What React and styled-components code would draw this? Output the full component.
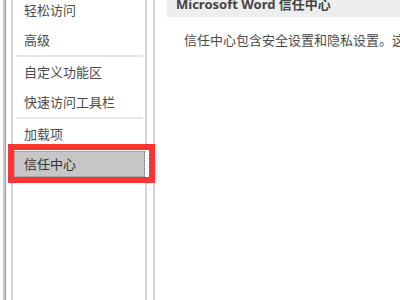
import styled, { createGlobalStyle } from "styled-components";

const GlobalStyle = createGlobalStyle`
  html, body {
    margin: 0;
    padding: 0;
    background: #ffffff;
  }
  body {
    width: 400px;
    height: 300px;
    overflow: hidden;
    font-family: "Noto Sans", "Noto Sans CJK SC", sans-serif;
  }
`;

const groups = [
  ["轻松访问", "高级"],
  ["自定义功能区", "快速访问工具栏"],
  ["加载项", "信任中心"],
];

const selected = "信任中心";

const App = () => {
  return (
    <>
      <GlobalStyle />
      <Window>
        <Edge />
        <ListBox>
          <List>
            {groups.map((group, i) => (
              <Group key={i}>
                {i > 0 && <Separator />}
                {group.map((label) => (
                  <Item key={label} active={label === selected}>
                    {label}
                    {label === selected && <Highlight />}
                  </Item>
                ))}
              </Group>
            ))}
          </List>
        </ListBox>
        <Divider />
        <Content>
          <Header>Microsoft Word 信任中心</Header>
          <Text>信任中心包含安全设置和隐私设置。这些设置有助于保护计算机的安全。</Text>
        </Content>
      </Window>
    </>
  );
};

const Window = styled.div`
  display: flex;
  width: 400px;
  height: 300px;
  overflow: hidden;
`;

const Edge = styled.div`
  flex: none;
  width: 3px;
  margin: 0 5px 0 3px;
  background: linear-gradient(to right, #c9c9c9 0 2px, #7aa4e0 2px 3px);
`;

const ListBox = styled.div`
  flex: none;
  box-sizing: border-box;
  width: 136px;
  height: 100%;
  padding-left: 1px;
  border-left: 2px solid #d6d6d6;
  border-right: 2px solid #d6d6d6;
`;

const List = styled.div`
  display: flex;
  flex-direction: column;
  margin-top: -5px;
`;

const Group = styled.div`
  display: flex;
  flex-direction: column;
`;

const Separator = styled.div`
  height: 2px;
  margin: 0 2px 0 2px;
  background: #e6e6e6;
`;

const Item = styled.div`
  position: relative;
  box-sizing: border-box;
  height: 26px;
  margin: 2px 0;
  padding-left: 9px;
  font-size: 13px;
  line-height: 24px;
  color: ${(props) => (props.active ? "#333333" : "#4a4a4a")};
  background: ${(props) => (props.active ? "#c6c6c6" : "transparent")};
  border: 1px dotted ${(props) => (props.active ? "#8a8a8a" : "transparent")};
  border-right-color: ${(props) => (props.active ? "#666666" : "transparent")};
  white-space: nowrap;
`;

const Highlight = styled.span`
  position: absolute;
  top: -8px;
  left: -7px;
  right: -11px;
  bottom: -7px;
  border: 6px solid #fc3434;
  box-shadow: inset -4px 0 0 #ffffff;
  pointer-events: none;
`;

const Divider = styled.div`
  flex: none;
  width: 2px;
  margin-left: 6px;
  background: #d6d6d6;
`;

const Content = styled.div`
  flex: 1;
  min-width: 0;
  display: flex;
  flex-direction: column;
  padding-left: 12px;
`;

const Header = styled.div`
  height: 26px;
  margin-top: -9px;
  padding-left: 9px;
  background: #eeeeee;
  font-size: 13px;
  font-weight: 700;
  line-height: 26px;
  color: #444444;
  white-space: nowrap;
`;

const Text = styled.div`
  margin-top: 13px;
  padding-left: 17px;
  font-size: 13px;
  line-height: 20px;
  color: #4a4a4a;
  white-space: nowrap;
`;

export default App;
